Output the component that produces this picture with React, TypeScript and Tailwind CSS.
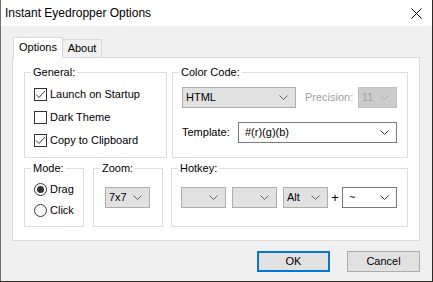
import React from 'react';

const Chevron = ({ color = '#606060' }: { color?: string }) => (
  <svg width="9" height="5" viewBox="0 0 9 5" className="shrink-0">
    <path d="M0.5 0.5 L4.5 4.5 L8.5 0.5" fill="none" stroke={color} strokeWidth="1" />
  </svg>
);

const Checkbox = ({ checked, label }: { checked: boolean; label: string }) => (
  <div className="flex items-center h-[13px]">
    <div className="w-[13px] h-[13px] border border-[#333333] bg-white flex items-center justify-center">
      {checked && (
        <svg width="11" height="11" viewBox="0 0 11 11">
          <path d="M1 5.5 L4 8.5 L10 2" fill="none" stroke="#333333" strokeWidth="1" />
        </svg>
      )}
    </div>
    <span className="ml-[3px]">{label}</span>
  </div>
);

const Radio = ({ checked, label }: { checked: boolean; label: string }) => (
  <div className="flex items-center h-[13px]">
    <div className="w-[13px] h-[13px] rounded-full border border-[#333333] bg-white flex items-center justify-center">
      {checked && <div className="w-[7px] h-[7px] rounded-full bg-[#333333]" />}
    </div>
    <span className="ml-[3px]">{label}</span>
  </div>
);

interface ComboProps {
  value?: string;
  width: string;
  variant?: 'button' | 'edit' | 'disabled';
}

const Combo = ({ value = '', width, variant = 'button' }: ComboProps) => {
  const styles = {
    button: 'bg-[#e1e1e1] border-[#adadad] text-black pl-[3px]',
    edit: 'bg-white border-[#7a7a7a] text-black pl-[6px]',
    disabled: 'bg-[#cccccc] border-[#bfbfbf] text-[#a0a0a0] pl-[3px]',
  };
  return (
    <div className={`${width} h-[21px] border flex items-center justify-between pr-[7px] ${styles[variant]}`}>
      <span>{value}</span>
      <Chevron color={variant === 'disabled' ? '#a8a8a8' : variant === 'edit' ? '#333333' : '#606060'} />
    </div>
  );
};

const Group = ({
  title,
  className,
  children,
}: {
  title: string;
  className: string;
  children?: React.ReactNode;
}) => (
  <div className={`relative border border-[#dcdcdc] ${className}`}>
    <span className="absolute left-[6px] -top-[8px] px-[2px] bg-white leading-[14px]">{title}</span>
    {children}
  </div>
);

export default function App() {
  return (
    <div className="w-[433px] h-[282px] bg-[#2d2a27] font-['Liberation_Sans',Arial,sans-serif] text-[11px] text-black">
      <div className="w-[432px] h-[281px] border-l border-[#707070] bg-[#f0f0f0] flex flex-col">
        {/* Title bar */}
        <div className="h-[26px] bg-white flex items-center justify-between pl-[4px] pr-[10px] text-[12px]">
          <span>Instant Eyedropper Options</span>
          <svg width="11" height="11" viewBox="0 0 11 11">
            <path d="M0.5 0.5 L10.5 10.5 M10.5 0.5 L0.5 10.5" stroke="#000" strokeWidth="1" />
          </svg>
        </div>

        <div className="pl-[11px] pt-[11px]">
          {/* Tabs */}
          <div className="flex items-end h-[20px] pl-px">
            <div className="relative z-10 h-[21px] -mb-px w-[50px] bg-white border border-b-0 border-[#d9d9d9] flex items-center justify-center pb-[2px]">
              Options
            </div>
            <div className="h-[18px] w-[39px] border border-l-0 border-b-0 border-[#d9d9d9] flex items-center justify-center">
              About
            </div>
          </div>

          {/* Panel */}
          <div className="w-[408px] h-[184px] border border-[#d9d9d9] bg-white pl-[11px] pt-[14px]">
            <div className="flex gap-[5px]">
              <Group title="General:" className="w-[143px] h-[86px] pl-[9px] pt-[15px]">
                <div className="flex flex-col gap-[10px]">
                  <Checkbox checked label="Launch on Startup" />
                  <Checkbox checked={false} label="Dark Theme" />
                  <Checkbox checked label="Copy to Clipboard" />
                </div>
              </Group>
              <Group title="Color Code:" className="w-[236px] h-[86px] pl-[9px] pr-[10px] pt-[14px]">
                <div className="flex items-center">
                  <Combo value="HTML" width="w-[114px]" />
                  <span className="ml-[9px] text-[#a0a0a0]">Precision:</span>
                  <div className="ml-auto">
                    <Combo value="11" width="w-[39px]" variant="disabled" />
                  </div>
                </div>
                <div className="flex items-center mt-[14px]">
                  <span>Template:</span>
                  <div className="ml-auto">
                    <Combo value="#(r)(g)(b)" width="w-[159px]" variant="edit" />
                  </div>
                </div>
              </Group>
            </div>

            <div className="flex mt-[10px]">
              <Group title="Mode:" className="w-[60px] h-[59px] pl-[9px] pt-[14px]">
                <div className="flex flex-col gap-[8px]">
                  <Radio checked label="Drag" />
                  <Radio checked={false} label="Click" />
                </div>
              </Group>
              <Group title="Zoom:" className="ml-[9px] w-[70px] h-[59px] pl-[11px] pt-[18px]">
                <Combo value="7x7" width="w-[45px]" />
              </Group>
              <Group title="Hotkey:" className="ml-[8px] w-[237px] h-[59px] pl-[9px] pt-[18px]">
                <div className="flex items-center gap-[6px]">
                  <Combo width="w-[45px]" />
                  <Combo width="w-[45px]" />
                  <div className="flex items-center">
                    <Combo value="Alt" width="w-[45px]" />
                    <span className="w-[14px] text-center text-[13px]">+</span>
                    <Combo value="~" width="w-[55px]" variant="edit" />
                  </div>
                </div>
              </Group>
            </div>
          </div>

          {/* Buttons */}
          <div className="w-[408px] flex justify-end gap-[17px] mt-[10px]">
            <div className="w-[73px] h-[21px] border-2 border-[#0078d7] bg-[#e1e1e1] flex items-center justify-center">
              OK
            </div>
            <div className="w-[73px] h-[21px] border border-[#adadad] bg-[#e1e1e1] flex items-center justify-center">
              Cancel
            </div>
          </div>
        </div>
      </div>
    </div>
  );
}
